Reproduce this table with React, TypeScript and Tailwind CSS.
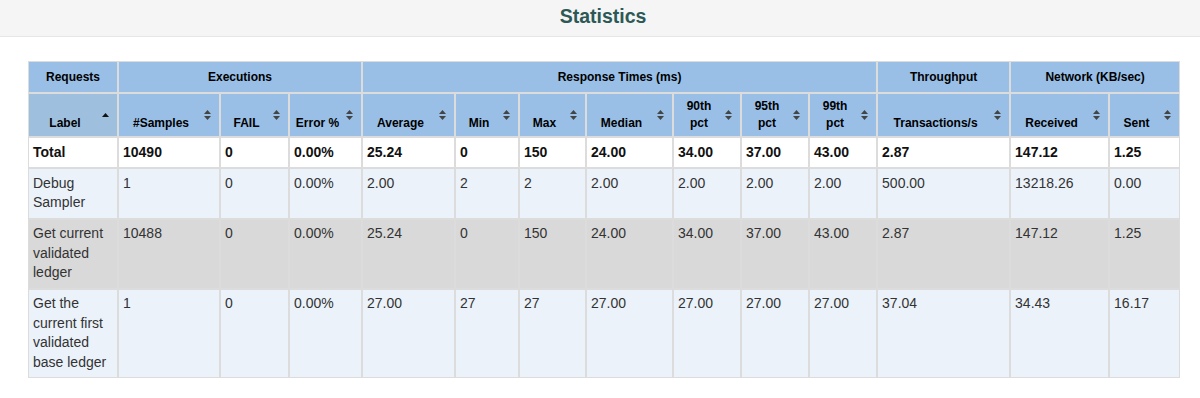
import React from "react";

type Row = { cells: string[]; bg: string; bold?: boolean };

const widths = [90, 102, 69, 73, 93, 64, 67, 87, 68, 68, 68, 133, 99, 71];

const colHeaders: { label: string; asc?: boolean }[] = [
  { label: "Label", asc: true },
  { label: "#Samples" },
  { label: "FAIL" },
  { label: "Error %" },
  { label: "Average" },
  { label: "Min" },
  { label: "Max" },
  { label: "Median" },
  { label: "90th pct" },
  { label: "95th pct" },
  { label: "99th pct" },
  { label: "Transactions/s" },
  { label: "Received" },
  { label: "Sent" },
];

const rows: Row[] = [
  {
    cells: ["Total", "10490", "0", "0.00%", "25.24", "0", "150", "24.00", "34.00", "37.00", "43.00", "2.87", "147.12", "1.25"],
    bg: "bg-white",
    bold: true,
  },
  {
    cells: ["Debug Sampler", "1", "0", "0.00%", "2.00", "2", "2", "2.00", "2.00", "2.00", "2.00", "500.00", "13218.26", "0.00"],
    bg: "bg-[#ebf2fa]",
  },
  {
    cells: ["Get current validated ledger", "10488", "0", "0.00%", "25.24", "0", "150", "24.00", "34.00", "37.00", "43.00", "2.87", "147.12", "1.25"],
    bg: "bg-[#d9d9d9]",
  },
  {
    cells: ["Get the current first validated base ledger", "1", "0", "0.00%", "27.00", "27", "27", "27.00", "27.00", "27.00", "27.00", "37.04", "34.43", "16.17"],
    bg: "bg-[#ebf2fa]",
  },
];

function SortIcon({ asc }: { asc?: boolean }) {
  if (asc) {
    return (
      <svg width="7" height="4" viewBox="0 0 7 4" className="block">
        <polygon points="3.5,0 7,4 0,4" fill="#111" />
      </svg>
    );
  }
  return (
    <svg width="7" height="10" viewBox="0 0 7 10" className="block">
      <polygon points="3.5,0 7,4 0,4" fill="#444" />
      <polygon points="0,6 7,6 3.5,10" fill="#444" />
    </svg>
  );
}

export default function App() {
  const groupCell =
    "border border-[#dcdcdc] bg-[#99bfe6] text-center font-bold text-[12px] leading-[17px] pt-[7px] pb-[6px] px-[4px] text-black";
  return (
    <div className="min-h-[398px] bg-white font-['Liberation_Sans',Arial,Helvetica,sans-serif]">
      <div className="h-[37px] bg-[#f5f5f5] border-b border-[#e6e6e6] flex items-center justify-center pb-[2px]">
        <h1 className="text-[19.5px] font-bold text-[#2c5955] leading-none pl-[6px]">Statistics</h1>
      </div>
      <div className="pt-[24px] pl-[28px]">
        <table className="table-fixed border-separate border-spacing-0 w-[1152px]">
          <colgroup>
            {widths.map((w, i) => (
              <col key={i} style={{ width: w }} />
            ))}
          </colgroup>
          <thead>
            <tr>
              <th className={groupCell}>Requests</th>
              <th className={groupCell} colSpan={3}>
                Executions
              </th>
              <th className={groupCell} colSpan={7}>
                Response Times (ms)
              </th>
              <th className={groupCell}>Throughput</th>
              <th className={groupCell} colSpan={2}>
                Network (KB/sec)
              </th>
            </tr>
            <tr>
              {colHeaders.map((h, i) => (
                <th
                  key={i}
                  className={
                    "relative border border-[#dcdcdc] align-bottom text-center font-bold text-[12px] leading-[17px] pl-[4px] pr-[20px] pt-[4px] pb-[4px] text-black " +
                    (h.asc ? "bg-[#9fbfdf]" : "bg-[#99bfe6]")
                  }
                >
                  {h.label}
                  <span className="absolute right-[8px] top-1/2 -translate-y-1/2">
                    <SortIcon asc={h.asc} />
                  </span>
                </th>
              ))}
            </tr>
          </thead>
          <tbody>
            {rows.map((r, ri) => (
              <tr key={ri} className={r.bg}>
                {r.cells.map((c, ci) => (
                  <td
                    key={ci}
                    className={
                      "border border-[#dcdcdc] align-top text-left text-[14px] leading-[19.5px] px-[4px] py-[4.75px] " +
                      (r.bold ? "font-bold text-[#111]" : "text-[#333]")
                    }
                  >
                    {c}
                  </td>
                ))}
              </tr>
            ))}
          </tbody>
        </table>
      </div>
    </div>
  );
}
